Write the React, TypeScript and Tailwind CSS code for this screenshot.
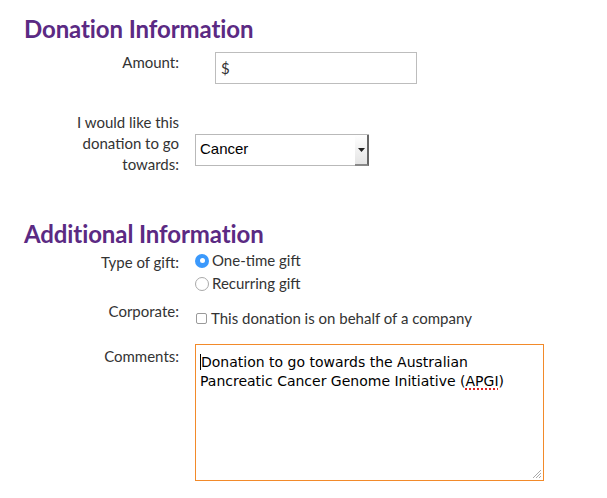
import React from 'react'

const label = 'text-right text-[15px] leading-[21px] text-[#333]'

function Heading({ children }: { children: React.ReactNode }) {
  return <h2 className="text-[24px] leading-[30px] font-bold text-[#5b2a83] tracking-[-0.1px]">{children}</h2>
}

function Row({ name, children, className = '' }: { name: React.ReactNode; children: React.ReactNode; className?: string }) {
  return (
    <div className={`grid grid-cols-[155px_1fr] gap-x-4 ${className}`}>
      <div className={label}>{name}</div>
      <div>{children}</div>
    </div>
  )
}

export default function App() {
  return (
    <div className="w-[607px] h-[498px] bg-white px-6 pt-[14px] font-['Lato',sans-serif] overflow-hidden">
      <Heading>Donation Information</Heading>

      <Row name="Amount:" className="mt-[8px]">
        <div className="ml-5 w-[202px] h-[32px] border border-[#bdbdbd] px-[5px] flex items-center text-[15px] text-[#333]">$</div>
      </Row>

      <Row
        className="mt-[28px]"
        name={
          <>
            I would like this
            <br />
            donation to go
            <br />
            towards:
          </>
        }
      >
        <div className="mt-[22px] w-[174px] h-[32px] border border-[#b9b9b9] flex">
          <span className="flex-1 flex items-center pl-1 pb-px text-[15px] text-black font-['Liberation_Sans',sans-serif]">Cancer</span>
          <span className="w-[14px] flex items-center justify-center bg-gradient-to-b from-white to-[#e4e4e4] border-r-2 border-b-2 border-r-[#666] border-b-[#888] -mr-px -mb-px">
            <svg width="7" height="4" viewBox="0 0 7 4"><path d="M0 0h7L3.5 4z" fill="#222" /></svg>
          </span>
        </div>
      </Row>

      <div className="mt-[44px]">
        <Heading>Additional Information</Heading>
      </div>

      <Row name="Type of gift:" className="mt-[3px]">
        <div className="-mt-[3px] flex flex-col text-[15px] leading-[23px] text-[#333]">
          <label className="flex items-center gap-[3px]">
            <span className="w-[14px] h-[14px] rounded-full bg-[#3b99fc] flex items-center justify-center">
              <span className="w-[5px] h-[5px] rounded-full bg-white" />
            </span>
            One-time gift
          </label>
          <label className="flex items-center gap-[3px]">
            <span className="w-[14px] h-[14px] rounded-full border border-[#a9a9a9] bg-white" />
            Recurring gift
          </label>
        </div>
      </Row>

      <Row name="Corporate:" className="mt-[6px]">
        <label className="mt-[6px] flex items-center gap-[4px] text-[15px] leading-[23px] text-[#333]">
          <span className="ml-px w-[11px] h-[11px] rounded-[2px] border border-[#9a9a9a] bg-white" />
          This donation is on behalf of a company
        </label>
      </Row>

      <Row name="Comments:" className="mt-[16px]">
        <div className="relative -mt-[2px] w-[349px] h-[137px] bg-[#f28a2a] p-px">
          <div className="w-full h-full bg-white px-[4px] pt-[8px] font-['DejaVu_Sans',sans-serif] text-[14px] leading-[19px] text-black">
            <span className="border-l border-black" />
            Donation to go towards the Australian
            <br />
            Pancreatic Cancer Genome Initiative (
            <span className="underline decoration-dotted decoration-[#e02020] decoration-2 underline-offset-2">APGI</span>)
          </div>
          <svg className="absolute right-[2px] bottom-[2px]" width="10" height="10" viewBox="0 0 10 10">
            <path d="M9 1L1 9M9 4L4 9M9 7L7 9" stroke="#aaa" strokeWidth="1" />
          </svg>
        </div>
      </Row>
    </div>
  )
}
